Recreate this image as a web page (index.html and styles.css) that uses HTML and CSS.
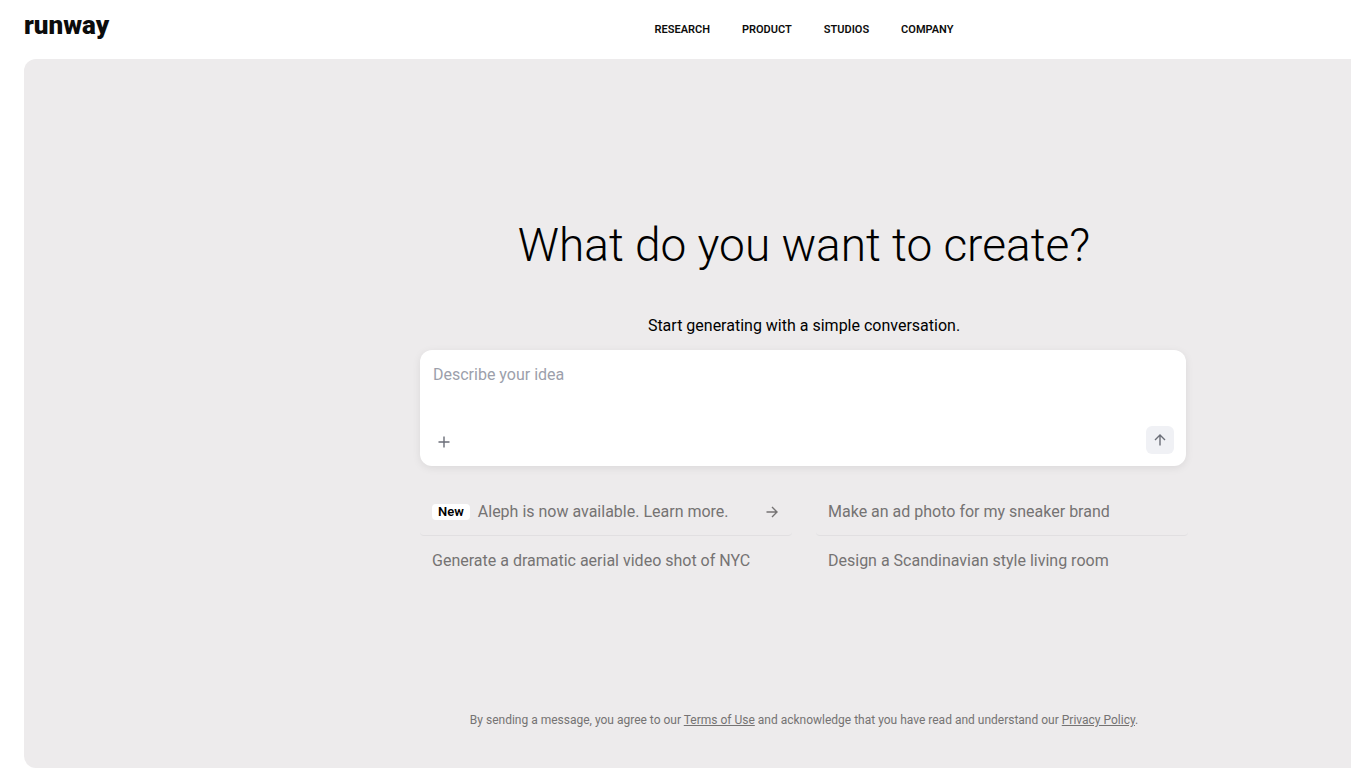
FILE: index.html
```html
<!DOCTYPE html>
<html lang="en">
<head>
    <meta charset="UTF-8">
    <meta name="viewport" content="width=device-width, initial-scale=1.0">
    <title>Runway</title>
    <link rel="stylesheet" href="styles.css">
</head>
<body>
    <div class="page">
        <header class="header">
            <a class="logo" href="#">runway</a>
            <nav class="nav">
                <a href="#">RESEARCH</a>
                <a href="#">PRODUCT</a>
                <a href="#">STUDIOS</a>
                <a href="#">COMPANY</a>
            </nav>
        </header>

        <main class="panel">
            <div class="hero">
                <h1>What do you want to create?</h1>
                <label class="subtitle" for="idea">Start generating with a simple conversation.</label>

                <form class="composer">
                    <textarea id="idea" name="idea" rows="2" placeholder="Describe your idea"></textarea>
                    <div class="composer-actions">
                        <button class="icon-button add-button" type="button" aria-label="Add attachment">
                            <svg width="16" height="16" viewBox="0 0 16 16"><path d="M8 2.5v11M2.5 8h11"/></svg>
                        </button>
                        <button class="icon-button send-button" type="submit" aria-label="Send">
                            <svg width="16" height="16" viewBox="0 0 16 16"><path d="M8 13.5V3M3 8l5-5 5 5"/></svg>
                        </button>
                    </div>
                </form>

                <div class="suggestions">
                    <a class="suggestion" href="#">
                        <span class="badge">New</span>
                        <span>Aleph is now available. Learn more.</span>
                        <svg class="arrow" width="16" height="16" viewBox="0 0 16 16"><path d="M2.5 8H13M8 3l5 5-5 5"/></svg>
                    </a>
                    <button class="suggestion" type="button">Make an ad photo for my sneaker brand</button>
                    <button class="suggestion" type="button">Generate a dramatic aerial video shot of NYC</button>
                    <button class="suggestion" type="button">Design a Scandinavian style living room</button>
                </div>
            </div>

            <p class="legal">By sending a message, you agree to our <a href="#">Terms of Use</a> and acknowledge that you have read and understand our <a href="#">Privacy Policy</a>.</p>
        </main>
    </div>
</body>
</html>
```
FILE: styles.css
```css
* {
    box-sizing: border-box;
}

body {
    margin: 0;
    background: #fff;
    color: #000;
    font-family: Roboto, "Liberation Sans", Arial, sans-serif;
    font-size: 16px;
    line-height: 24px;
}

.page {
    display: flex;
    flex-direction: column;
    min-height: 100vh;
    padding-left: 24px;
}

.header {
    display: flex;
    height: 59px;
}

.logo {
    width: 233px;
    padding-top: 8px;
    color: #0c0c0c;
    font-size: 26px;
    font-weight: 900;
    line-height: 34px;
    text-decoration: none;
}

.nav {
    display: flex;
    flex: 1;
    align-items: center;
    justify-content: center;
    gap: 32px;
}

.nav a {
    color: #0c0c0c;
    font-size: 11px;
    font-weight: 600;
    line-height: 16px;
    text-decoration: none;
}

/* left padding lines the content up with the nav */
.panel {
    display: flex;
    flex: 1;
    flex-direction: column;
    align-items: center;
    padding: 0 0 40px 233px;
    border-radius: 12px 0 0 12px;
    background: #edebec;
}

.hero {
    display: flex;
    flex: 1;
    flex-direction: column;
    justify-content: center;
    width: 100%;
    max-width: 768px;
    padding-top: 30px;
}

h1 {
    margin: 0 0 40px;
    font-size: 46px;
    font-weight: 350;
    line-height: 58px;
    text-align: center;
}

.subtitle {
    margin-bottom: 12px;
    text-align: center;
}

.composer {
    max-width: 766px;
    padding: 12px;
    border-radius: 12px;
    background: #fff;
    box-shadow: 0 2px 8px rgba(0, 0, 0, 0.08);
}

.composer textarea {
    display: block;
    width: 100%;
    height: 64px;
    padding: 1px 1px 0;
    border: 0;
    outline: 0;
    resize: none;
    background: none;
    color: #000;
    font: inherit;
}

.composer textarea::placeholder {
    color: #9c9fab;
}

.composer-actions {
    display: flex;
    justify-content: space-between;
}

.icon-button {
    display: flex;
    align-items: center;
    justify-content: center;
    width: 28px;
    height: 28px;
    padding: 0;
    border: 0;
    border-radius: 6px;
    background: none;
    color: #6b6e78;
    cursor: pointer;
}

.add-button {
    width: 24px;
    height: 32px;
    margin-bottom: -4px;
}

.send-button {
    background: #f0f1f5;
}

svg {
    fill: none;
    stroke: currentColor;
    stroke-width: 1.4;
}

.suggestions {
    display: grid;
    grid-template-columns: 1fr 1fr;
    column-gap: 24px;
    margin-top: 21px;
}

.suggestion {
    display: flex;
    align-items: center;
    gap: 8px;
    height: 49px;
    padding: 1px 12px 0;
    border: 0;
    border-bottom: 1px solid transparent;
    border-radius: 4px;
    background: none;
    color: #757373;
    font: inherit;
    text-align: left;
    text-decoration: none;
    cursor: pointer;
}

.suggestion:nth-child(-n+2) {
    border-bottom-color: #e1dfe1;
}

.badge {
    padding: 0 6px;
    border-radius: 4px;
    background: #fff;
    color: #000;
    font-size: 13px;
    font-weight: 600;
    line-height: 16px;
}

.arrow {
    margin-left: auto;
}

.legal {
    margin: 0;
    color: #757373;
    font-size: 12px;
    line-height: 16px;
}

.legal a {
    color: inherit;
}
```
